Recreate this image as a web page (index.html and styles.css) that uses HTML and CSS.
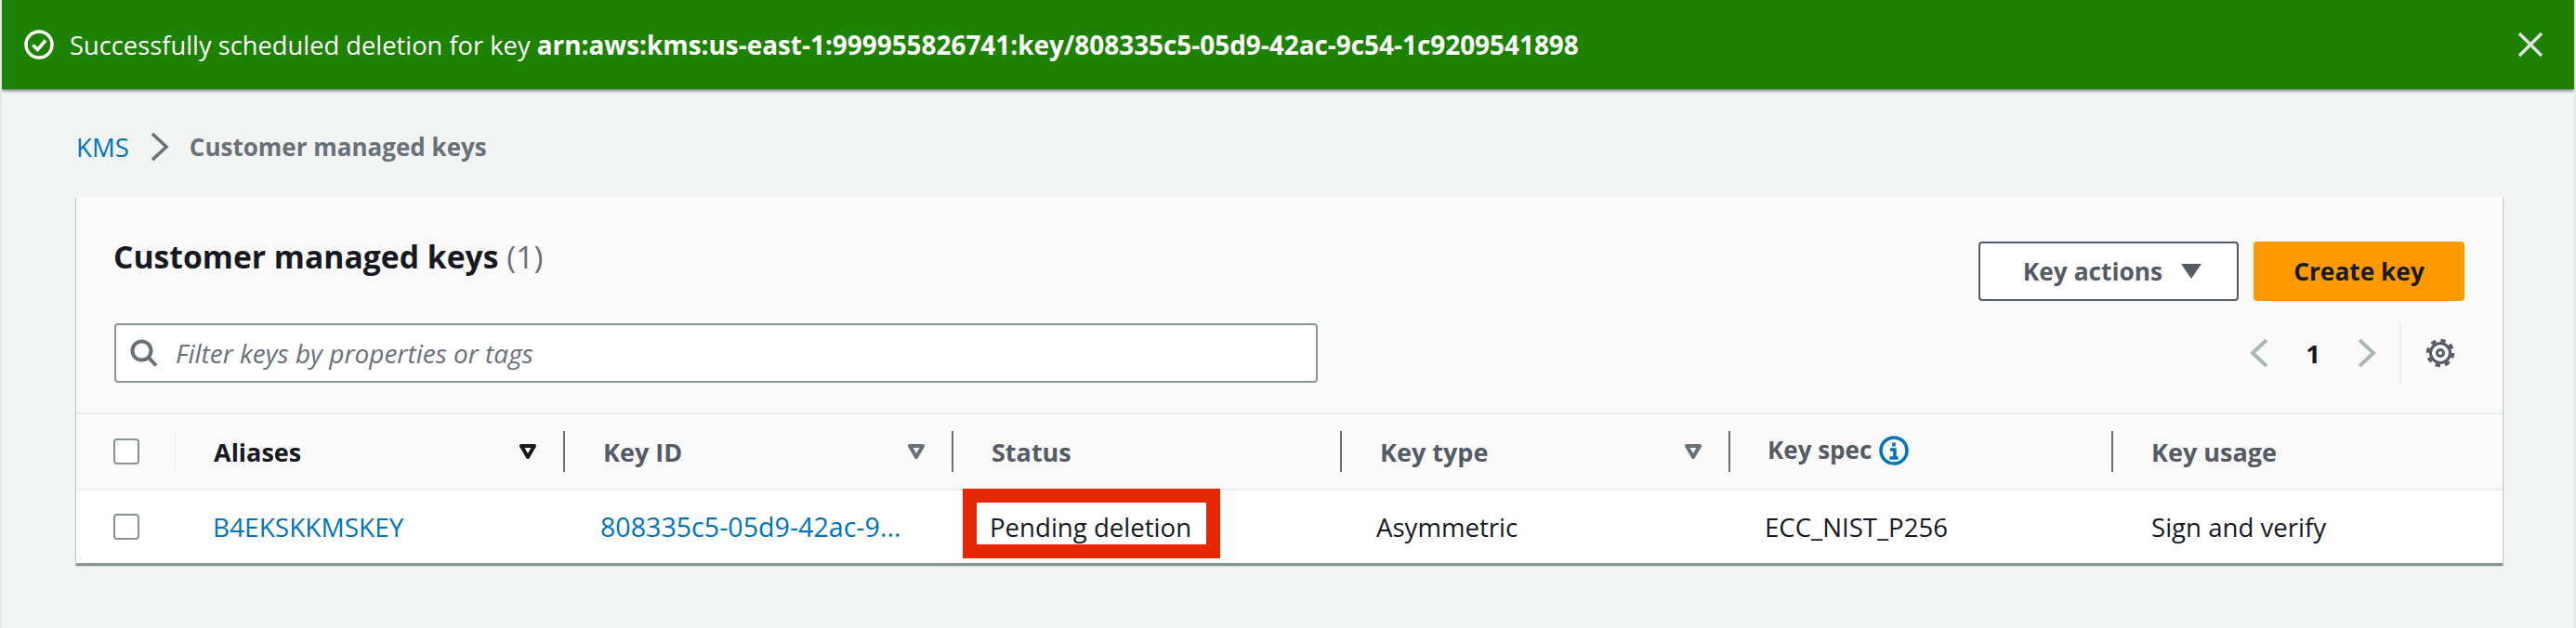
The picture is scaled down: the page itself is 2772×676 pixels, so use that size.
FILE: index.html
```html
<!DOCTYPE html>
<html lang="en">
<head>
  <meta charset="UTF-8" />
  <title>Customer managed keys</title>
  <link rel="stylesheet" href="styles.css">
</head>
<body>
  <div class="flash">
    <svg class="flash-icon" viewBox="0 0 32 32"><circle cx="16" cy="16" r="14"/><path d="M9.500 16.500l5 5 8.500-10"/></svg>
    <div class="flash-text">Successfully scheduled deletion for key <b>arn:aws:kms:us-east-1:999955826741:key/808335c5-05d9-42ac-9c54-1c9209541898</b></div>
    <svg class="flash-close" viewBox="0 0 28 28"><path d="M2 2l24 24M26 2L2 26"/></svg>
  </div>

  <div class="content">
    <div class="crumbs">
      <a class="link" href="#">KMS</a>
      <svg class="crumb-sep" viewBox="0 0 20 30"><path d="M2 1l15 14L2 29"/></svg>
      <span class="crumb-here">Customer managed keys</span>
    </div>

    <div class="card">
      <div class="card-top">
        <div class="card-left">
          <h1>Customer managed keys <span class="count">(1)</span></h1>
          <div class="search">
            <svg class="search-icon" viewBox="0 0 30 30"><circle cx="12.500" cy="12.500" r="10"/><path d="M19.500 19.500l8.500 9"/></svg>
            <span>Filter keys by properties or tags</span>
          </div>
        </div>
        <div class="card-right">
          <div class="buttons">
            <div class="btn btn-normal">Key actions <i class="caret"></i></div>
            <div class="btn btn-primary">Create key</div>
          </div>
          <div class="pager">
            <svg class="page-arrow" viewBox="0 0 20 30"><path d="M18 1L3 15l15 14"/></svg>
            <span class="page-num">1</span>
            <svg class="page-arrow" viewBox="0 0 20 30"><path d="M2 1l15 14L2 29"/></svg>
            <div class="pager-sep">
              <svg class="gear" viewBox="0 0 32 32">
                <circle cx="16" cy="16" r="3.500"/>
                <circle cx="16" cy="16" r="10.500"/>
                <circle class="gear-teeth" cx="16" cy="16" r="13.500"/>
              </svg>
            </div>
          </div>
        </div>
      </div>

      <div class="table-head">
        <div class="th th-check"><i class="checkbox"></i></div>
        <div class="th th-active">Aliases <svg class="sort" viewBox="0 0 20 16"><path d="M3 2h14l-7 12z"/></svg></div>
        <div class="th">Key ID <svg class="sort" viewBox="0 0 20 16"><path d="M3 2h14l-7 12z"/></svg></div>
        <div class="th">Status</div>
        <div class="th">Key type <svg class="sort" viewBox="0 0 20 16"><path d="M3 2h14l-7 12z"/></svg></div>
        <div class="th th-spec"><span class="spec-label">Key spec</span>
          <svg class="info" viewBox="0 0 32 32"><circle cx="16" cy="16" r="14"/><path d="M16 7.500v4M12 15H17V23M11.500 24H20.500"/></svg>
        </div>
        <div class="th th-last">Key usage</div>
      </div>
      <div class="table-row">
        <div class="td td-check"><i class="checkbox"></i></div>
        <div class="td td-link"><a class="link" href="#">B4EKSKKMSKEY</a></div>
        <div class="td td-link td-id"><a class="link" href="#">808335c5-05d9-42ac-9...</a></div>
        <div class="td td-status">Pending deletion<div class="highlight"></div></div>
        <div class="td">Asymmetric</div>
        <div class="td">ECC_NIST_P256</div>
        <div class="td td-last">Sign and verify</div>
      </div>
    </div>
  </div>
</body>
</html>
```

FILE: styles.css
```css
* {
  box-sizing: border-box;
}
body {
  margin: 0;
  height: 676px;
  overflow: hidden;
  background: #f2f3f3;
  font-family: "Open Sans", "Noto Sans", sans-serif;
  font-size: 27.6px;
  color: #16191f;
  border-left: 2px solid #e6e8e8;
  border-right: 2px solid #e6e8e8;
}
.link {
  color: #0073bb;
  text-decoration: none;
}

.flash {
  display: flex;
  align-items: center;
  height: 96px;
  background: #1d8102;
  color: #fff;
  padding: 0 33px 0 24px;
  box-shadow: 0 2px 3px rgba(0,28,36,0.5);
}
.flash-icon {
  width: 32px;
  height: 32px;
  fill: none;
  stroke: #fff;
  stroke-width: 3.500;
  margin-right: 17px;
}
.flash-text {
  flex: 1;
  font-size: 27.3px;
}
.flash-text b {
  font-size: 27.9px;
}
.flash-close {
  width: 28px;
  height: 28px;
  fill: none;
  stroke: #e0e4e4;
  stroke-width: 3.500;
}

.content {
  padding: 0 77px 0 80px;
}
.crumbs {
  display: flex;
  align-items: center;
  height: 116px;
  padding-top: 8px;
}
.crumb-sep {
  width: 20px;
  height: 30px;
  margin: 0 22px 0 23px;
  fill: none;
  stroke: #687078;
  stroke-width: 3.500;
}
.crumb-here {
  color: #687078;
  font-size: 26px;
  font-weight: 700;
}

.card {
  background: #fafafa;
  box-shadow: 0 1px 1px rgba(0,28,36,0.3), 1px 1px 1px rgba(0,28,36,0.15), -1px 1px 1px rgba(0,28,36,0.15);
}
.card-top {
  display: flex;
  justify-content: space-between;
  height: 234px;
  padding: 48px 41px 0 41px;
  border-bottom: 2px solid #eaeded;
}
h1 {
  margin: 0 0 0 -1px;
  font-size: 33.7px;
  font-weight: 700;
  line-height: 32px;
}
.count {
  color: #687078;
  font-weight: 400;
}
.search {
  display: flex;
  align-items: center;
  width: 1295px;
  height: 64px;
  margin-top: 56px;
  padding: 0 15px;
  background: #fff;
  border: 2px solid #879596;
  border-radius: 4px;
  color: #687078;
  font-size: 28px;
  font-style: italic;
}
.search-icon {
  width: 30px;
  height: 30px;
  margin-right: 19px;
  fill: none;
  stroke: #687078;
  stroke-width: 4;
}

.card-right {
  display: flex;
  flex-direction: column;
  align-items: flex-end;
}
.buttons {
  display: flex;
  gap: 16px;
}
.btn {
  display: flex;
  align-items: center;
  justify-content: center;
  height: 64px;
  border-radius: 4px;
  font-size: 26.3px;
  font-weight: 700;
}
.btn-normal {
  width: 280px;
  padding-left: 8px;
  background: #fff;
  border: 2px solid #545b64;
  color: #545b64;
}
.caret {
  width: 0;
  height: 0;
  margin-left: 20px;
  border-left: 11px solid transparent;
  border-right: 11px solid transparent;
  border-top: 16px solid #545b64;
}
.btn-primary {
  width: 227px;
  background: #ff9900;
  color: #16191f;
}
.pager {
  display: flex;
  align-items: center;
  height: 64px;
  margin-top: 24px;
}
.page-arrow {
  width: 20px;
  height: 30px;
  fill: none;
  stroke: #aab7b8;
  stroke-width: 4;
}
.page-num {
  margin: 0 40px;
  font-weight: 700;
}
.pager-sep {
  display: flex;
  align-items: center;
  height: 64px;
  margin-left: 25px;
  padding-left: 26px;
  padding-right: 10px;
  border-left: 2px solid #eaeded;
}
.gear {
  width: 32px;
  height: 32px;
  fill: none;
  stroke: #545b64;
  stroke-width: 3;
}
.gear-teeth {
  stroke-width: 3.500;
  stroke-dasharray: 5.300 5.300;
}

.table-head,
.table-row {
  display: grid;
  grid-template-columns: 107px 419px 418px 418px 418px 412px 419px;
  align-items: center;
}
.table-head {
  height: 82px;
  border-bottom: 2px solid #eaeded;
}
.table-row {
  height: 80px;
  background: #fff;
  border-bottom: 2px solid #879596;
}
.th {
  display: flex;
  align-items: center;
  justify-content: space-between;
  height: 44px;
  padding: 0 28px 0 41px;
  border-right: 2px solid #687078;
  color: #545b64;
  font-size: 27px;
  font-weight: 700;
}
.th-check {
  padding: 0 0 0 40px;
  border-right: 1px solid #eaeded;
}
.th-active {
  color: #16191f;
}
.th-spec {
  justify-content: flex-start;
  gap: 8px;
}
.spec-label {
  margin: -4px 0 0 -1px;
  font-size: 26px;
}
.th-last {
  border-right: 0;
}
.checkbox {
  display: block;
  width: 28px;
  height: 28px;
  background: #fff;
  border: 2px solid #879596;
  border-radius: 4px;
}
.sort {
  width: 20px;
  height: 16px;
  fill: none;
  stroke: #687078;
  stroke-width: 4;
  stroke-linejoin: round;
}
.th-active .sort {
  stroke: #16191f;
}
.info {
  width: 32px;
  height: 32px;
  margin-top: -2px;
  fill: none;
  stroke: #0073bb;
  stroke-width: 3.500;
}
.td {
  position: relative;
  min-width: 0;
  padding: 0 28px 0 37px;
  line-height: 38px;
  white-space: nowrap;
}
.td-link {
  padding-left: 40px;
}
.td-link .link {
  font-size: 28px;
}
.td-id {
  padding-left: 38px;
}
.td-id .link {
  font-size: 28.6px;
}
.td-status {
  padding-left: 39px;
}
.td-last {
  padding-left: 41px;
}
.td-check {
  padding: 0 0 0 40px;
}
.highlight {
  position: absolute;
  left: 10px;
  top: -22px;
  width: 277px;
  height: 75px;
  border: 15px solid #e52800;
}
```
